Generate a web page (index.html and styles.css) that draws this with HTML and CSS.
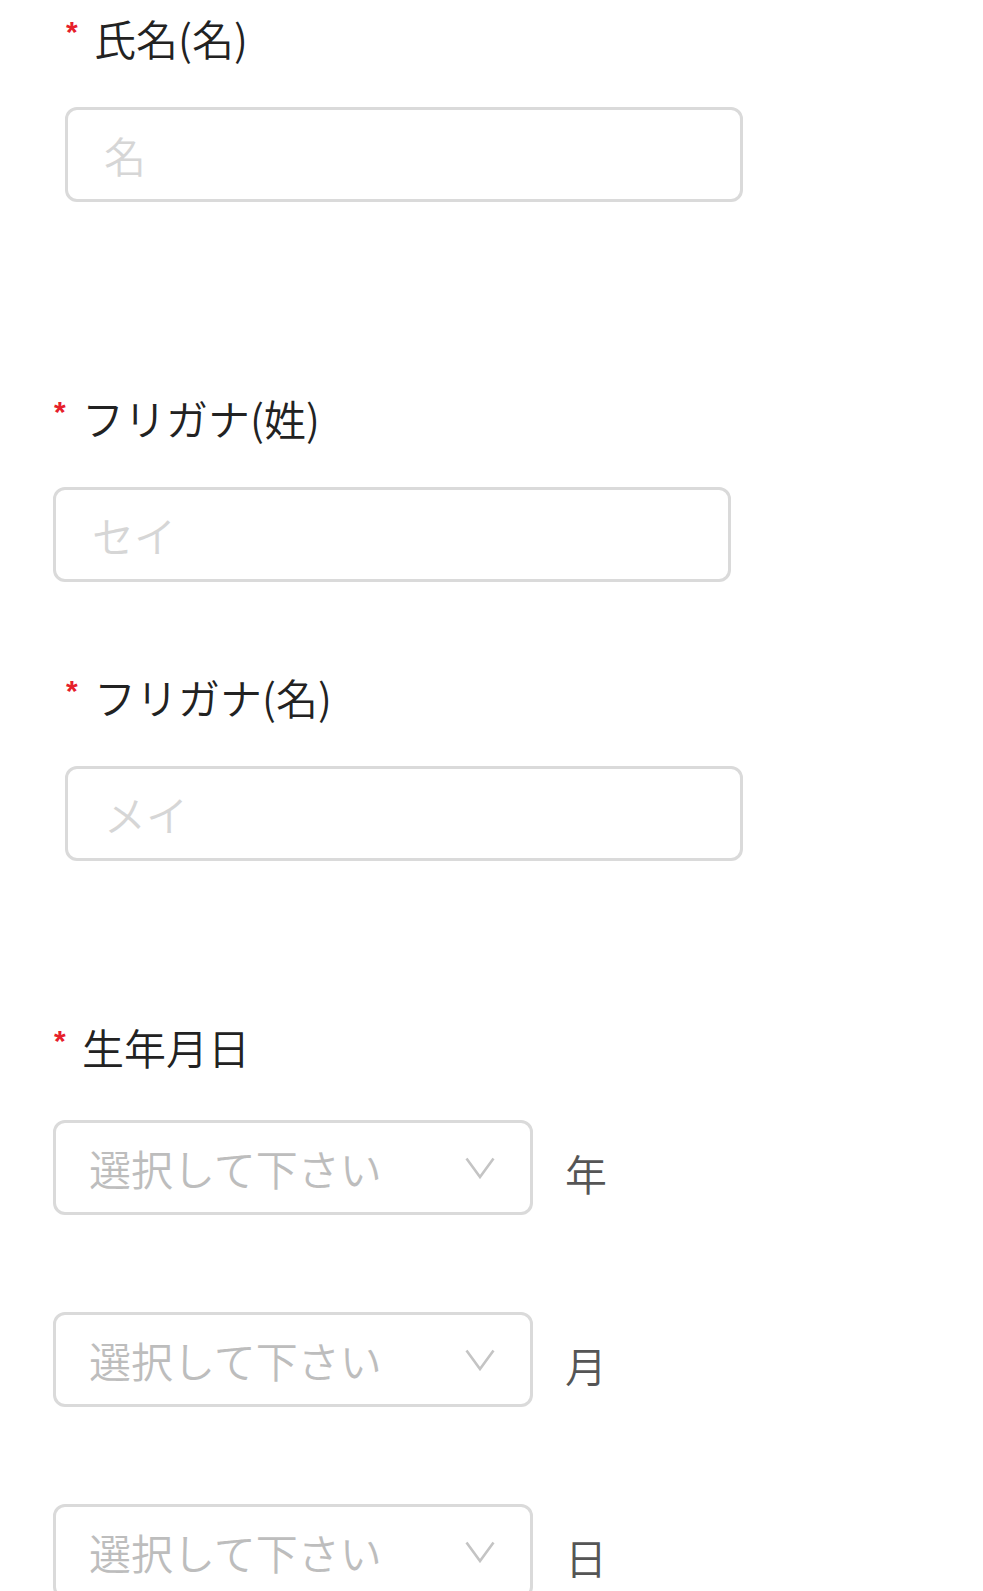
FILE: index.html
```html
<!DOCTYPE html>
<html lang="ja">
<head>
    <meta charset="UTF-8">
    <meta name="viewport" content="width=device-width, initial-scale=1.0">
    <title>会員登録</title>
    <link rel="stylesheet" href="styles.css">
</head>
<body>

    <form class="profile-form">

        <div class="field field-inset">
            <label class="field-label" for="firstName"><span class="req">*</span>氏名(名)</label>
            <input type="text" class="text-input" id="firstName" placeholder="名">
        </div>

        <div class="field field-kana-sei">
            <label class="field-label" for="kanaSei"><span class="req">*</span>フリガナ(姓)</label>
            <input type="text" class="text-input" id="kanaSei" placeholder="セイ">
        </div>

        <div class="field field-inset field-kana-mei">
            <label class="field-label" for="kanaMei"><span class="req">*</span>フリガナ(名)</label>
            <input type="text" class="text-input" id="kanaMei" placeholder="メイ">
        </div>

        <div class="field field-birth">
            <label class="field-label field-label-birth"><span class="req">*</span>生年月日</label>

            <div class="date-row">
                <div class="select-box">
                    <select class="select" id="birthYear">
                        <option value="">選択して下さい</option>
                    </select>
                    <svg class="chevron" width="30" height="22" viewBox="0 0 30 22"><polyline points="1.5,1.5 15,20 28.5,1.5" fill="none" stroke="#c4c4c4" stroke-width="2.6"/></svg>
                </div>
                <span class="unit">年</span>
            </div>

            <div class="date-row">
                <div class="select-box">
                    <select class="select" id="birthMonth">
                        <option value="">選択して下さい</option>
                    </select>
                    <svg class="chevron" width="30" height="22" viewBox="0 0 30 22"><polyline points="1.5,1.5 15,20 28.5,1.5" fill="none" stroke="#c4c4c4" stroke-width="2.6"/></svg>
                </div>
                <span class="unit">月</span>
            </div>

            <div class="date-row">
                <div class="select-box">
                    <select class="select" id="birthDay">
                        <option value="">選択して下さい</option>
                    </select>
                    <svg class="chevron" width="30" height="22" viewBox="0 0 30 22"><polyline points="1.5,1.5 15,20 28.5,1.5" fill="none" stroke="#c4c4c4" stroke-width="2.6"/></svg>
                </div>
                <span class="unit">日</span>
            </div>
        </div>

    </form>

</body>
</html>
```

FILE: styles.css
```css
body {
    font-family: "Noto Sans CJK JP", "Noto Sans", sans-serif;
    background: #fff;
    color: #333;
    margin: 0;
}

.profile-form {
    padding-top: 8px;
}

.field {
    padding-left: 53px;
}

.field-inset {
    padding-left: 65px;
}

.field-kana-sei {
    margin-top: 186px;
}

.field-kana-mei {
    margin-top: 85px;
}

.field-birth {
    margin-top: 156px;
}

.field-label {
    display: flex;
    align-items: center;
    height: 60px;
    margin-bottom: 39px;
    font-size: 42px;
    font-weight: 350;
    line-height: 60px;
    color: #222;
}

.field-label-birth {
    margin-bottom: 43px;
}

.req {
    width: 28px;
    margin-bottom: 12px;
    padding-left: 1px;
    font-family: "Liberation Sans", sans-serif;
    font-size: 30px;
    font-weight: bold;
    line-height: 30px;
    color: #e6202a;
}

.text-input {
    display: block;
    box-sizing: border-box;
    width: 678px;
    height: 95px;
    padding: 0 36px;
    border: 3px solid #dadada;
    border-radius: 12px;
    font-family: inherit;
    font-size: 42px;
    font-weight: 350;
    color: #333;
    background: #fff;
    outline: none;
}

.text-input::placeholder {
    color: #d6d6d6;
}

.date-row {
    display: flex;
    align-items: center;
    margin-bottom: 97px;
}

.select-box {
    position: relative;
    width: 480px;
    height: 95px;
}

.select {
    appearance: none;
    -webkit-appearance: none;
    box-sizing: border-box;
    width: 100%;
    height: 100%;
    padding: 0 80px 0 33px;
    border: 3px solid #dadada;
    border-radius: 12px;
    font-family: inherit;
    font-size: 42px;
    font-weight: 350;
    color: #bdbdbd;
    background: #fff;
    outline: none;
}

.chevron {
    position: absolute;
    right: 38px;
    top: 50%;
    transform: translateY(-50%);
    pointer-events: none;
}

.unit {
    margin-left: 32px;
    margin-top: 10px;
    font-size: 42px;
    font-weight: 350;
    color: #555;
}
```
